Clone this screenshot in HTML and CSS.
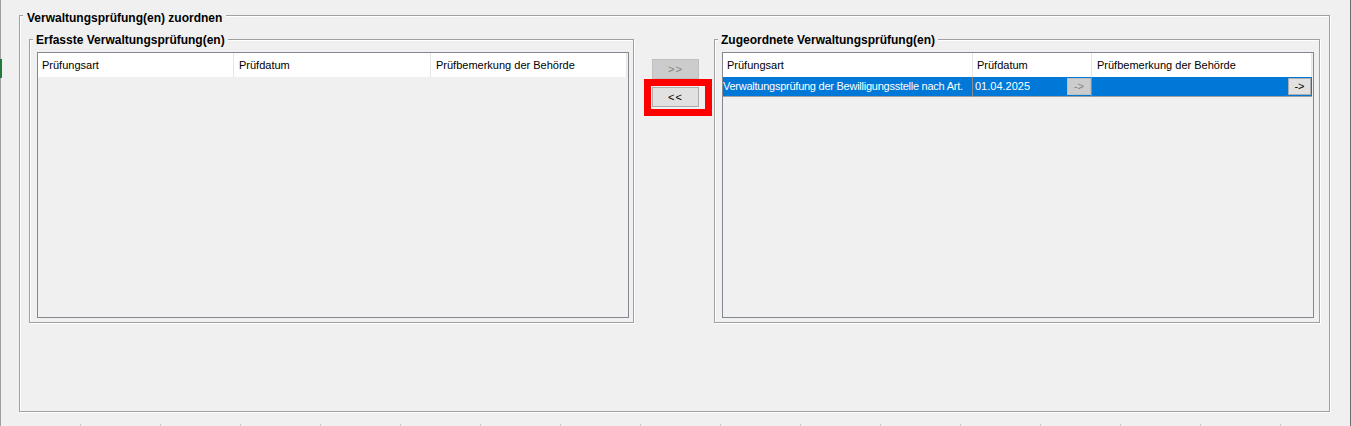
FILE: index.html
```html
<!DOCTYPE html>
<html lang="de">
<head>
    <meta charset="UTF-8">
    <title>Verwaltungsprüfung(en) zuordnen</title>
    <link rel="stylesheet" href="styles.css">
</head>
<body>
    <div class="screen">
        <div class="edge-left"><div class="edge-mark"></div></div>
        <div class="main">
            <div class="group outer">
                <span class="group-title">Verwaltungsprüfung(en) zuordnen</span>
                <div class="lists">
                    <!-- linke Liste: erfasste Prüfungen -->
                    <div class="group list-box">
                        <span class="group-title">Erfasste Verwaltungsprüfung(en)</span>
                        <div class="grid">
                            <div class="grid-head">
                                <div class="head-cell l-art">Prüfungsart</div>
                                <div class="head-cell l-datum">Prüfdatum</div>
                                <div class="head-cell l-bem">Prüfbemerkung der Behörde</div>
                            </div>
                        </div>
                    </div>

                    <div class="transfer">
                        <button class="btn btn-add" disabled>&gt;&gt;</button>
                        <div class="marker">
                            <button class="btn">&lt;&lt;</button>
                        </div>
                    </div>

                    <!-- rechte Liste: zugeordnete Prüfungen -->
                    <div class="group list-box assigned">
                        <span class="group-title">Zugeordnete Verwaltungsprüfung(en)</span>
                        <div class="grid">
                            <div class="grid-head">
                                <div class="head-cell r-art">Prüfungsart</div>
                                <div class="head-cell r-datum">Prüfdatum</div>
                                <div class="head-cell r-bem">Prüfbemerkung der Behörde</div>
                            </div>
                            <div class="grid-row">
                                <div class="cell r-art"><span class="cell-text long">Verwaltungsprüfung der Bewilligungsstelle nach Art.</span></div>
                                <div class="cell r-datum"><span class="cell-text">01.04.2025</span><button class="cell-btn" disabled>-&gt;</button></div>
                                <div class="cell r-bem"><button class="cell-btn">-&gt;</button></div>
                            </div>
                        </div>
                    </div>
                </div>
            </div>
            <div class="ruler"></div>
        </div>
        <div class="edge-right"></div>
    </div>
</body>
</html>
```

FILE: styles.css
```css
body {
    margin: 0;
    background-color: #f0f0f0;
    font-family: "Liberation Sans", Arial, sans-serif;
    font-size: 11px;
    color: #000;
}
.screen {
    display: flex;
    width: 1351px;
    height: 426px;
    overflow: hidden;
}
.edge-left {
    flex: none;
    width: 2px;
    background: linear-gradient(to right, #a0a0a0 1px, transparent 1px);
}
.edge-mark {
    margin-top: 59px;
    height: 19px;
    background-color: #217a3c;
}
.edge-right {
    flex: none;
    width: 1px;
    background-color: #6e6e6e;
}
.main {
    flex: 1;
    padding: 15px 0 0 17px;
}

/* GroupBox mit geätztem Rahmen */
.group {
    box-sizing: border-box;
    border: 1px solid #a0a0a0;
    box-shadow: 1px 1px 0 #fff, inset 1px 1px 0 #fff;
}
.group-title {
    display: block;
    width: max-content;
    height: 14px;
    line-height: 14px;
    font-size: 12px;
    font-weight: bold;
    background-color: #f0f0f0;
}
.outer {
    width: 1311px;
    height: 397px;
}
.outer > .group-title {
    margin: -5px 0 0 3px;
    padding: 0 4px;
}
.lists {
    display: flex;
    align-items: flex-start;
    margin: 14px 0 0 9px;
}
.list-box {
    flex: none;
    width: 605px;
    height: 284px;
}
.list-box.assigned {
    width: 606px;
}
.list-box > .group-title {
    margin: -7px 0 0 3px;
    padding: 0 3px;
}

/* Tabellen */
.grid {
    box-sizing: border-box;
    width: 592px;
    height: 266px;
    margin: 5px 0 0 7px;
    border: 1px solid #828790;
    background-color: #f0f0f0;
}
.grid-head {
    display: flex;
    height: 24px;
}
.head-cell {
    box-sizing: border-box;
    flex: none;
    background-color: #fff;
    border-right: 1px solid #e5e5e5;
    padding-left: 5px;
    line-height: 24px;
    white-space: nowrap;
    overflow: hidden;
}
.head-cell.l-art, .head-cell.r-art, .head-cell.r-datum {
    padding-left: 4px;
}
.l-art { width: 196px; }
.l-datum { width: 197px; }
.l-bem { width: 196px; }
.r-art { width: 250px; }
.r-datum { width: 119px; }
.r-bem { width: 220px; }

.grid-row {
    display: flex;
    height: 20px;
}
.cell {
    box-sizing: border-box;
    flex: none;
    display: flex;
    align-items: flex-start;
    background-color: #0078d7;
    color: #fff;
    border-right: 1px solid #8a8a8a;
    border-bottom: 1px solid #a0a0a0;
    line-height: 19px;
    white-space: nowrap;
    overflow: hidden;
}
.cell.r-datum .cell-text {
    padding-left: 2px;
}
.cell.r-bem {
    border-right: none;
}
.cell-text.long {
    letter-spacing: -0.25px;
}
.cell-btn {
    box-sizing: border-box;
    flex: none;
    width: 24px;
    height: 17px;
    margin: 1px 0 0 auto;
    padding: 0;
    border: 1px solid #adadad;
    background-color: #e1e1e1;
    font-family: "Liberation Sans", Arial, sans-serif;
    font-size: 11px;
    line-height: 15px;
    color: #000;
}
.cell-btn:disabled {
    background-color: #cccccc;
    border-color: #bfbfbf;
    color: #838383;
}
.cell.r-bem .cell-btn {
    width: 23px;
    margin-right: 1px;
}

/* Schaltflächen zwischen den Listen */
.transfer {
    flex: none;
    width: 80px;
    padding-top: 20px;
    display: flex;
    flex-direction: column;
    align-items: flex-start;
}
.btn {
    box-sizing: border-box;
    flex: none;
    width: 47px;
    height: 20px;
    padding: 0;
    border: 1px solid #adadad;
    background-color: #e1e1e1;
    font-family: "Liberation Sans", Arial, sans-serif;
    font-size: 11px;
    letter-spacing: 1px;
    color: #000;
}
.btn:disabled {
    background-color: #cccccc;
    border-color: #bfbfbf;
    color: #838383;
}
.btn-add {
    margin-left: 18px;
}
.marker {
    box-sizing: border-box;
    width: 68px;
    height: 37px;
    margin-left: 10px;
    padding: 1px 0 0 1px;
    border: 7px solid #ff0000;
}

.ruler {
    margin: 12px 0 0 -17px;
    height: 2px;
    background: repeating-linear-gradient(to right, transparent 0 78px, #c8c8c8 78px 79px, transparent 79px 80px);
}
```
